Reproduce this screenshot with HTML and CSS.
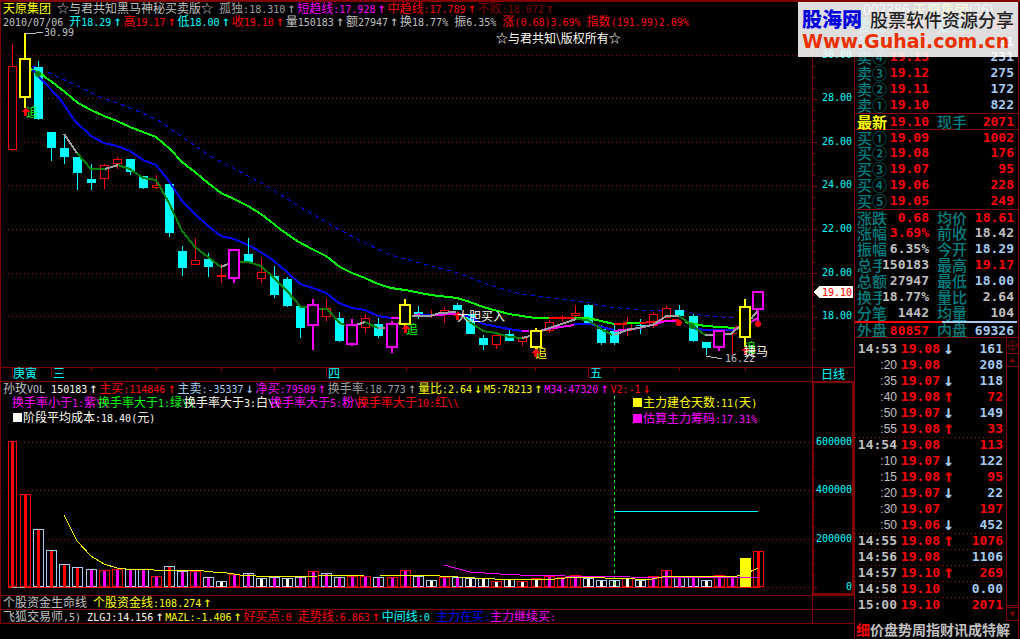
FILE: index.html
```html
<!DOCTYPE html>
<html lang="zh-CN">
<head>
<meta charset="utf-8">
<title>天原集团 002386</title>
<link rel="stylesheet" href="styles.css">
</head>
<body>
<main class="app">
  <section class="charts">
    <header class="band head">
      <div class="lines">
        <p class="line"><span class="yellow">天原集团</span> <span class="silver">☆与君共知黑马神秘买卖版☆</span> <span class="gray">孤独<b>:18.310</b><i>↑</i></span><span class="magenta">短趋线<b>:17.928</b><i>↑</i></span><span class="red">中趋线<b>:17.789</b><i>↑</i></span><span class="maroon">不败<b>:18.072</b><i>↑</i></span></p>
        <p class="line"><span class="silver"><b>2010/07/06</b></span> <span class="cyan">开<b>18.29</b><i>↑</i></span><span class="red">高<b>19.17</b><i>↑</i></span><span class="cyan">低<b>18.00</b><i>↑</i></span><span class="red">收<b>19.10</b><i>↑</i></span><span class="silver">量<b>150183</b><i>↑</i>额<b>27947</b><i>↑</i>换<b>18.77% </b>振<b>6.35%</b></span> <span class="red">涨<b>(0.68)3.69% </b>指数<b>(191.99)2.09%</b></span></p>
      </div>
      <div class="gutter"></div>
    </header>

    <svg class="plot" viewBox="0 28 854 353" role="img" aria-label="日线K线图">
      <path class="grid" d="M4 55.5H812M4 98.5H812M4 142.5H812M4 185.5H812M4 229.5H812M4 273.5H812M4 316.5H812"/>
      <path class="frame" d="M812.5 28V381M0 367.5H854M12.5 368v10M51.5 368v10M326.5 368v10M588.5 368v10M91.5 368v3M156.5 368v3M221.5 368v3M274.5 368v3M406.5 368v3M470.5 368v3M535.5 368v3M614.5 368v3M679.5 368v3M745.5 368v3"/>
      <g id="price-ticks" class="frame"></g>
      <path class="ma dash blue" d="M33 66L43 70L60 78L80 87L100 97L120 104L140 112L158 120L185 139L212 157L250 177L270 188L300 207L340 230L359 240L390 255L420 263L455 272L490 285L520 294L560 299L590 303L610 307L650 311L680 310L700 315L733 318"/>
      <path class="ma lime" d="M30 69L38 72L52 82L65 92L78 103L91 110L104 116L117 121L130 127L143 132L156 137L170 149L182 162L195 172L208 183L221 193L234 199L248 206L261 214L270 221L280 229L297 241L312 249L326 256L340 267L352 273L365 278L378 284L391 288L405 290L431 295L457 298L470 302L483 307L509 314L535 318H549"/>
      <path class="ma blue" d="M33 66L40 78L60 99L75 121L91 136L104 143L117 146L130 151L143 160L156 165L169 181L182 201L195 214L208 226L221 236L234 239L248 245L261 252L274 261L287 272L300 284L313 288L326 293L339 303L352 308L365 310L378 316L391 318"/>
      <g id="candles"></g>
      <path class="ma lime" d="M28 68L38 72L44 76M574 318H588L614 324M627 323H640M685 322L705 326L735 328"/>
      <path class="ma red" d="M549 318H574M614 324H627M640 323L679 320M735 328L741 326"/>
      <path class="ma blue" d="M33 70L44 82M156 165L169 181L182 201M420 315H431M457 314L470 317L483 324L509 329L522 331M574 324H590L614 330M692 328L705 330H733"/>
      <path class="ma magenta" d="M391 318H399M412 316L420 314M431 315L457 314M522 331H529M541 330L574 325M614 331L640 328L666 321H676M733 330L740 327M751 322L758 318"/>
      <path class="ma gray" d="M64 134L77 153M105 169L118 165M221 267L228 264M356 325L365 322M378 328H385M397 324L401 322M412 316H430L440 313L456 312M522 338L530 336M541 331L576 319M614 335L627 330L653 325L666 316H679M705 335L731 334L740 326M751 319L758 310"/>
      <path class="ma green" d="M77 153L91 169H105M118 165L130 169L143 178L156 180L169 203L182 231L195 247L208 257L221 267M240 262H248L261 266L274 278L287 291L301 307H308M319 309H327L340 323L345 325M365 322L378 328M457 312L470 322L483 331L496 333L509 337L522 338M576 319L588 320L601 329L612 335M679 316L692 325L705 335"/>
      <g id="highlights"></g>
      <g class="ball"><circle class="fill-green" cx="38" cy="74" r="3"/><circle class="fill-green" cx="692" cy="326" r="3"/><circle class="fill-red" cx="679" cy="323" r="3"/><circle class="fill-red" cx="758" cy="324" r="3"/></g>
      <path class="leader" d="M26 33.5H36M36 32.5H43M706 356L722 359"/>
      <g class="txt">
        <text class="lime" x="26" y="117">追</text>
        <text class="lime" x="406" y="334">追</text>
        <text class="yellow" x="535" y="358">追</text>
        <text class="lime" x="744" y="352">追</text>
        <g class="fill-red">
          <path id="up" d="M26 107l4 5h-3v4h-3v-4h-2z"/>
          <use href="#up" x="380" y="217"/><use href="#up" x="432" y="204"/><use href="#up" x="510" y="241"/><use href="#up" x="720" y="239"/>
        </g>
        <text class="silver num" x="44" y="36">30.99</text>
        <text class="silver num" x="725" y="362">16.22</text>
        <text class="white" x="457" y="321">大胆买入</text>
        <text class="white" x="744" y="356">捷马</text>
        <text class="white" x="496" y="43">☆与君共知\版权所有☆</text>
        <text class="cyan" x="13" y="378">庚寅</text>
        <text class="cyan" x="53" y="378">三</text>
        <text class="cyan" x="328" y="378">四</text>
        <text class="cyan" x="590" y="378">五</text>
        <text class="cyan" x="821" y="379">日线</text>
        <g class="num cyan end">
          <text x="852" y="58">30.00</text><text x="852" y="101">28.00</text><text x="852" y="145">26.00</text><text x="852" y="188">24.00</text><text x="852" y="232">22.00</text><text x="852" y="276">20.00</text><text x="852" y="319">18.00</text>
        </g>
        <path class="tag" d="M813 292l6-6h34v12h-34z"/>
        <text class="num red end" x="852" y="296">19.10</text>
      </g>
    </svg>

    <div class="band volhead">
      <p class="line"><span class="silver">孙玫<b>VOL</b></span> <span class="white"><b>150183</b><i>↑</i></span><span class="red">主买<b>:114846</b><i>↑</i></span><span class="ice">主卖<b>:-35337</b><i>↓</i></span><span class="magenta">净买<b>:79509</b><i>↑</i></span><span class="gray">换手率<b>:18.773</b><i>↑</i></span><span class="yellow">量比<b>:2.64</b><i>↓</i><b>M5:78213</b><i>↑</i></span><span class="magenta"><b>M34:47320</b><i>↑</i></span><span class="red"><b>V2:-1</b><i>↓</i></span></p>
      <div class="gutter heavy"></div>
    </div>

    <svg class="plot" viewBox="0 395 854 200" role="img" aria-label="成交量图">
      <path class="grid" d="M4 442.5H812M4 490.5H812M4 539.5H812M4 587.5H812"/>
      <path class="frame thick" d="M813 395V594H853V395"/>
      <g id="volume-ticks" class="frame"></g>
      <g id="volume"></g>
      <path class="thin red" d="M8 587.5H760"/>
      <path class="thin gray" d="M12 587.5H25"/>
      <path class="thin lime vdash" d="M614.5 396V587"/>
      <path class="thin cyan" d="M615 511.5H758"/>
      <path class="thin magenta" d="M444 565L470 572L500 574L530 575.5L600 576.5L660 577.5H758"/>
      <path class="thin yellow" d="M64 515L77 541L91 556L104 564L117 568L130 569.5H148L160 570.5H200L213 572L227 573L240 575L256 576L275 577L318 576L365 575L380 575L396 576L420 575L450 576.5L475 578L505 579.5H550L570 577.5L605 578L650 579.5L662 577L675 576.5H735L745 574L758 568"/>
      <g class="txt">
        <text class="magenta" x="12" y="407">换手率小于<tspan class="num">1:</tspan>紫<tspan class="num">\\</tspan></text>
        <text class="lime" x="98" y="407">换手率大于<tspan class="num">1:</tspan>绿<tspan class="num">\\</tspan></text>
        <text class="white" x="184" y="407">换手率大于<tspan class="num">3:</tspan>白<tspan class="num">\\</tspan></text>
        <text class="magenta" x="270" y="407">换手率大于<tspan class="num">5:</tspan>粉<tspan class="num">\\</tspan></text>
        <text class="red" x="357" y="407">换手率大于<tspan class="num">10:</tspan>红<tspan class="num">\\</tspan></text>
        <rect class="white" x="13" y="413" width="9" height="9"/>
        <text class="white" x="23" y="422">阶段平均成本<tspan class="num">:18.40(</tspan>元<tspan class="num">)</tspan></text>
        <rect class="yellow" x="633" y="398" width="9" height="9"/>
        <text class="yellow" x="643" y="407">主力建仓天数<tspan class="num">:11(</tspan>天<tspan class="num">)</tspan></text>
        <rect class="magenta" x="633" y="414" width="9" height="9"/>
        <text class="magenta" x="643" y="423">估算主力筹码<tspan class="num">:17.31%</tspan></text>
        <g class="num cyan end">
          <text x="852" y="445">600000</text><text x="852" y="493">400000</text><text x="852" y="542">200000</text><text x="852" y="590">0</text>
        </g>
      </g>
    </svg>

    <div class="band foot">
      <p class="line"><span class="silver">个股资金生命线</span> <span class="yellow">个股资金线<b>:108.274</b><i>↑</i></span></p>
      <div class="gutter"></div>
    </div>
    <div class="band foot last">
      <p class="line"><span class="silver">飞狐交易师<b>,5)</b></span> <span class="white"><b>ZLGJ:14.156</b><i>↑</i></span><span class="yellow"><b>MAZL:-1.406</b><i>↑</i></span><span class="red">好买点<b>:0 </b>走势线<b>:6.863</b><i>↑</i></span><span class="cyan">中间线<b>:0</b></span> <span class="blue">主力在买<b>:</b></span><span class="magenta">主力继续买<b>:</b></span></p>
      <div class="gutter"></div>
    </div>
  </section>

  <aside class="side">
    <h1 class="title">002386 <span class="yellow">天原集团</span>(26)</h1>
    <table class="quotes">
      <tbody>
        <tr><th>委比</th><td class="red">3.08%</td><th>委差</th><td class="red">260</td></tr>
        <tr class="rule"><th>卖⑤</th><td class="red">19.14</td><th></th><td class="ice">81</td></tr>
        <tr><th>卖④</th><td class="red">19.13</td><th></th><td class="ice">231</td></tr>
        <tr><th>卖③</th><td class="red">19.12</td><th></th><td class="ice">275</td></tr>
        <tr><th>卖②</th><td class="red">19.11</td><th></th><td class="ice">172</td></tr>
        <tr><th>卖①</th><td class="red">19.10</td><th></th><td class="ice">822</td></tr>
        <tr class="rule red"><th class="strong">最新</th><td>19.10</td><th>现手</th><td>2071</td></tr>
        <tr class="rule red"><th>买①</th><td>19.09</td><th></th><td>1002</td></tr>
        <tr class="red"><th>买②</th><td>19.08</td><th></th><td>176</td></tr>
        <tr class="red"><th>买③</th><td>19.07</td><th></th><td>95</td></tr>
        <tr class="red"><th>买④</th><td>19.06</td><th></th><td>228</td></tr>
        <tr class="red"><th>买⑤</th><td>19.05</td><th></th><td>249</td></tr>
        <tr class="rule"><th>涨跌</th><td class="red">0.68</td><th>均价</th><td class="red">18.61</td></tr>
        <tr><th>涨幅</th><td class="red">3.69%</td><th>前收</th><td>18.42</td></tr>
        <tr><th>振幅</th><td>6.35%</td><th>今开</th><td class="ice">18.29</td></tr>
        <tr><th>总手</th><td>150183</td><th>最高</th><td class="red">19.17</td></tr>
        <tr><th>总额</th><td>27947</td><th>最低</th><td class="ice">18.00</td></tr>
        <tr><th>换手</th><td>18.77%</td><th>量比</th><td>2.64</td></tr>
        <tr><th>分笔</th><td>1442</td><th>均量</th><td>104</td></tr>
        <tr class="split"><th>外盘</th><td class="red">80857</td><th>内盘</th><td class="ice">69326</td></tr>
      </tbody>
    </table>
    <div class="tape">
      <table class="ticks">
        <tbody>
          <tr><th>14:53</th><td>19.08</td><td class="ice">↓</td><td class="ice">161</td></tr>
          <tr><th class="sec">:20</th><td>19.08</td><td></td><td class="ice">208</td></tr>
          <tr><th class="sec">:35</th><td>19.07</td><td class="ice">↓</td><td class="ice">118</td></tr>
          <tr><th class="sec">:40</th><td>19.08</td><td>↑</td><td>72</td></tr>
          <tr><th class="sec">:50</th><td>19.07</td><td class="ice">↓</td><td class="ice">149</td></tr>
          <tr><th class="sec">:55</th><td>19.08</td><td>↑</td><td>33</td></tr>
          <tr class="minute"><th>14:54</th><td>19.08</td><td></td><td>113</td></tr>
          <tr><th class="sec">:10</th><td>19.07</td><td class="ice">↓</td><td class="ice">122</td></tr>
          <tr><th class="sec">:15</th><td>19.08</td><td>↑</td><td>95</td></tr>
          <tr><th class="sec">:20</th><td>19.07</td><td class="ice">↓</td><td class="ice">22</td></tr>
          <tr><th class="sec">:30</th><td>19.07</td><td></td><td>197</td></tr>
          <tr><th class="sec">:50</th><td>19.06</td><td class="ice">↓</td><td class="ice">452</td></tr>
          <tr class="minute"><th>14:55</th><td>19.08</td><td>↑</td><td>1076</td></tr>
          <tr class="minute"><th>14:56</th><td>19.08</td><td></td><td class="ice">1106</td></tr>
          <tr class="minute"><th>14:57</th><td>19.10</td><td>↑</td><td>269</td></tr>
          <tr class="minute"><th>14:58</th><td>19.10</td><td></td><td class="ice">0.00</td></tr>
          <tr class="minute"><th>15:00</th><td>19.10</td><td></td><td>2071</td></tr>
        </tbody>
      </table>
      <div class="scroll">
        <button class="cross" aria-label="定位"><svg viewBox="0 0 14 14"><path d="M7 0V14M0 7H14"/><circle cx="7" cy="7" r="5.5"/></svg></button>
        <button class="arrow" aria-label="向上"><svg viewBox="0 0 12 12"><path d="M6 3l3 5H3z"/></svg></button>
        <div class="track"></div>
        <button class="arrow" aria-label="向下"><svg viewBox="0 0 12 12"><path d="M3 3h6L6 9z"/></svg></button>
      </div>
    </div>
    <nav class="tabs"><a href="#" class="red">细</a><a href="#">价</a><a href="#">盘</a><a href="#">势</a><a href="#">周</a><a href="#">指</a><a href="#">财</a><a href="#">讯</a><a href="#">成</a><a href="#">特</a><a href="#">解</a></nav>
  </aside>

  <div class="mark">
    <p class="mark-top"><span class="mark-name">股海网</span><span class="mark-sub">股票软件资源分享</span></p>
    <p class="mark-url">Www.Guhai.com.cn</p>
  </div>
</main>
<script src="chart.js"></script>
</body>
</html>
```
FILE: styles.css
```css
* { box-sizing: border-box; }
body {
  margin: 0;
  background: #000;
  color: #c0c0c0;
  font: 12px/13px "Noto Sans CJK SC", sans-serif;
}
p, h1 { margin: 0; font-weight: normal; }

.app {
  position: relative;
  display: grid;
  grid-template-columns: 1fr 166px;
  min-height: 100vh;
  border-top: 2px solid #800000;
}

/* palette, shared by text and SVG */
.yellow { color: #ff0; }
.silver { color: #c0c0c0; }
.gray { color: #a0a0a4; }
.magenta { color: #f0f; }
.red { color: #f00; }
.maroon { color: #800000; }
.cyan { color: #0ff; }
.lime { color: #0f0; }
.green { color: #008000; }
.blue { color: #00f; }
.white { color: #fffbf0; }
.ice { color: #a6caf0; }
.fill-green { fill: #008000; }
.fill-red { fill: #f00; }

.charts { align-self: start; box-shadow: inset 1px 0 #800000; }
.band { display: grid; grid-template-columns: 812fr 42fr; white-space: nowrap; }
.line {
  height: 13px;
  padding-left: 3px;
  white-space: pre;
  font: 10px/11px "DejaVu Sans Mono", monospace;
}
.line span { font: 12px/11px "Noto Sans CJK SC", sans-serif; }
.line b, .num { font: 10px "DejaVu Sans Mono", monospace; }
.line b { line-height: 11px; }
.line i {
  display: inline-block;
  width: 12px;
  font: 14px/11px "DejaVu Sans Mono", monospace;
  text-align: center;
}
.gutter { border-left: 1px solid #800000; }
.heavy { border: 2px solid #800000; border-bottom: 0; }
.volhead, .foot { height: 14px; border-top: 1px solid #800000; }
.volhead .heavy { border-top-width: 1px; }
.last { height: 15px; border-bottom: 1px solid #800000; }

.plot { display: block; width: 100%; height: auto; }
.plot path, .plot rect { shape-rendering: crispEdges; }
.grid { fill: none; stroke: #800000; stroke-dasharray: 1 3; }
.frame { fill: none; stroke: #800000; }
.thick { stroke-width: 2; }
.ma, .thin { fill: none; stroke: currentColor; }
.ma { stroke-width: 2; }
.dash { stroke-width: 1; stroke-dasharray: 4 4; }
.vdash { stroke-dasharray: 3 3; }
.leader { fill: none; stroke: #c0c0c0; }
.txt text, .txt rect { fill: currentColor; }
.end { text-anchor: end; }
.tag { fill: #fffbf0; }
.body { fill: currentColor; }
.hollow { fill: #000; stroke: currentColor; }
.wide { stroke-width: 2; }

.side {
  display: flex;
  flex-direction: column;
  padding-right: 1px;
  border-left: 1px solid #800000;
  box-shadow: inset -1px 0 #000, inset -2px 0 #800000;
}
.title { height: 15px; padding-left: 8px; font: 14px/15px "Noto Sans CJK SC", sans-serif; }
table { display: block; }
tbody { display: block; }
tr { display: grid; height: 16px; line-height: 16px; }
td, th { padding: 0; white-space: nowrap; }
td, .ticks th { font: bold 13px/16px "DejaVu Sans Mono", monospace; }
.quotes tr { grid-template-columns: 31px 41px 38px 1fr; padding: 0 5px 0 2px; }
.quotes th { color: #008080; font: 500 15px/15px "Noto Sans CJK SC", sans-serif; text-align: left; }
.quotes th:nth-child(3) { padding-left: 8px; }
.quotes th.strong { color: #ff0; font-weight: 700; }
.quotes td { justify-self: end; background: #000; line-height: 16px; height: 15px; }
.rule { border-top: 1px solid #800000; }
.quotes .split { padding-top: 1px; background: linear-gradient(90deg, #f00 54%, #a6caf0 54%) 0 0 / 162px 2px no-repeat; }
.split td { margin-top: 1px; height: 14px; }

.tape { display: grid; grid-template-columns: 1fr 12px; border-top: 1px solid #800000; margin-right: 1px; }
.ticks { padding-top: 3px; padding-bottom: 8px; color: #f00; }
.ticks tr { grid-template-columns: 42px 43px 14px 1fr; padding-right: 3px; text-align: right; }
.ticks td:nth-child(3) { font-size: 18px; line-height: 14px; }
.ticks th { color: #c0c0c0; }
.ticks th.sec { font: 12px/16px "Liberation Sans", sans-serif; }
.minute { background: repeating-linear-gradient(90deg, #800000 0 1px, transparent 1px 4px) 0 0 / 100% 1px no-repeat; }
.scroll { display: flex; flex-direction: column; border-left: 1px solid #800000; }
.scroll button { display: block; width: 100%; padding: 0; border: 0; background: none; }
.scroll svg { display: block; width: 100%; fill: #800000; }
.scroll .cross { height: 16px; border-bottom: 1px solid #800000; }
.cross svg { fill: none; stroke: #800000; height: 15px; }
.scroll .arrow { height: 13px; border-bottom: 1px solid #800000; }
.track { flex: 1; border-bottom: 3px double #800000; }
.tabs { display: flex; padding-left: 1px; font: bold 14px/16px "Noto Sans CJK SC", sans-serif; }
.tabs a { color: #c0c0c0; text-decoration: none; }
.tabs .red { color: #f00; }

.mark {
  position: absolute;
  top: 0;
  right: 2px;
  width: 220px;
  height: 55px;
  padding: 5px 4px 0;
  background: rgba(255, 255, 255, 0.87);
  white-space: nowrap;
}
.mark-top { display: flex; justify-content: space-between; line-height: 24px; }
.mark-name { color: #00d; font-size: 20px; font-weight: 900; }
.mark-sub { color: #222; font-size: 18px; font-weight: 500; }
.mark-url { color: #e83000; font: bold 19px/20px "DejaVu Sans", sans-serif; }
```
FILE: chart.js
```js
const NS = "http://www.w3.org/2000/svg";
const COLORS = { r: "red", c: "cyan", y: "yellow", m: "magenta", b: "ice", w: "white" };

function rect(parent, cls, x, y, w, h) {
  const el = document.createElementNS(NS, "rect");
  el.setAttribute("class", cls);
  el.setAttribute("x", x);
  el.setAttribute("y", y);
  el.setAttribute("width", w);
  el.setAttribute("height", h);
  parent.appendChild(el);
}

const centre = (i) => Math.round(12 + i * 13.088);

// kind, high, top, bottom, low
const candles = [
  ["r",44,66,150,151],["y",33,58,98,108],["c",61,67,119,120],["c",132,132,148,161],["c",134,148,157,164],
  ["c",157,157,173,190],["c",164,179,183,190],["r",164,165,179,189],["r",157,159,164,169],["c",159,159,172,175],
  ["c",176,176,188,189],["r",175,185,188,189],["c",184,184,233,237],["c",246,251,268,276],["r",238,260,265,265],
  ["c",253,259,267,277],["r",264,275,277,283],["m",249,249,279,283],["c",238,254,262,262],["r",258,272,279,283],
  ["c",266,276,295,298],["c",277,279,306,307],["c",305,306,328,338],["m",299,304,326,350],["r",299,308,317,321],
  ["c",312,318,341,342],["m",319,324,345,346],["r",314,318,328,333],["c",318,324,336,338],["m",321,323,348,353],
  ["y",299,304,325,326],["c",306,312,314,319],["r",310,314,315,318],["r",307,310,313,323],["c",303,305,310,310],
  ["c",314,314,334,334],["c",335,338,345,350],["r",335,335,345,349],["c",330,334,341,341],["r",336,338,342,346],
  ["y",328,330,348,349],["r",320,322,331,333],["r",315,318,319,322],["r",305,313,316,320],["c",304,305,323,323],
  ["c",325,329,343,345],["c",325,331,343,345],["r",317,322,331,336],["c",319,325,326,334],["r",312,314,326,328],
  ["r",306,308,318,318],["c",305,310,316,316],["c",314,316,341,342],["c",342,342,348,355],["m",330,330,348,351],
  ["r",327,333,334,354],["y",299,306,338,347],["m",291,291,310,322]
];

const base = document.getElementById("candles");
const top2 = document.getElementById("highlights");
candles.forEach(([k, hi, t, b, lo], i) => {
  const x = centre(i);
  const color = COLORS[k];
  if (k === "y" || k === "m") {
    rect(top2, "body " + color, x - 1, hi, 2, lo - hi);
    rect(top2, "hollow wide " + color, x - 5, t + 1, 10, b - t - 2);
  } else {
    rect(base, "body " + color, x, hi, 1, lo - hi);
    if (k === "c" || b - t < 3) rect(base, "body " + color, x - 4, t, 9, b - t);
    else rect(base, "hollow " + color, x - 3.5, t + 0.5, 8, b - t - 1);
  }
});

// outline colour, core colour, top
const volume = "rr441 rr494 br529 br550 br564 br567 bm569 rm570 rm569 bm569 bm569 rm576 br566 bm571 rm571 bm577 bw581 rm574 bm573 bw578 bm577 bw578 bm577 rm571 bm573 bm577 rm576 rm576 bm577 rm577 rm570 bm576 bw580 rm577 bm577 bw578 bw578 rw581 bw579 rw581 rw578 rm576 rm577 rm575 bw578 bw580 bw580 rw578 bw580 rm576 rm570 bm577 bm577 bw580 rm575 rm576 yy558 rr551".split(" ");
const vol = document.getElementById("volume");
volume.forEach((v, i) => {
  const x = centre(i);
  const y = Number(v.slice(2));
  if (v[0] === "y") {
    rect(vol, "body yellow", x - 5, y, 11, 587 - y);
    return;
  }
  const half = i === 0 ? 4 : 5;
  rect(vol, "hollow " + COLORS[v[0]], x - half + 0.5, y + 0.5, half * 2, 586 - y);
  rect(vol, "body " + COLORS[v[1]], x - 1, y + 1, 3, 586 - y);
});

function ticks(id, start, step, count, major) {
  const g = document.getElementById(id);
  for (let i = 0; i < count; i++) {
    const p = document.createElementNS(NS, "path");
    const y = Math.round(start + i * step) + 0.5;
    p.setAttribute("d", "M813 " + y + "h" + (i % major === 0 ? 4 : 2));
    g.appendChild(p);
  }
}
ticks("price-ticks", 55, 10.9, 28, 4);
ticks("volume-ticks", 442, 12.08, 13, 4);
```
